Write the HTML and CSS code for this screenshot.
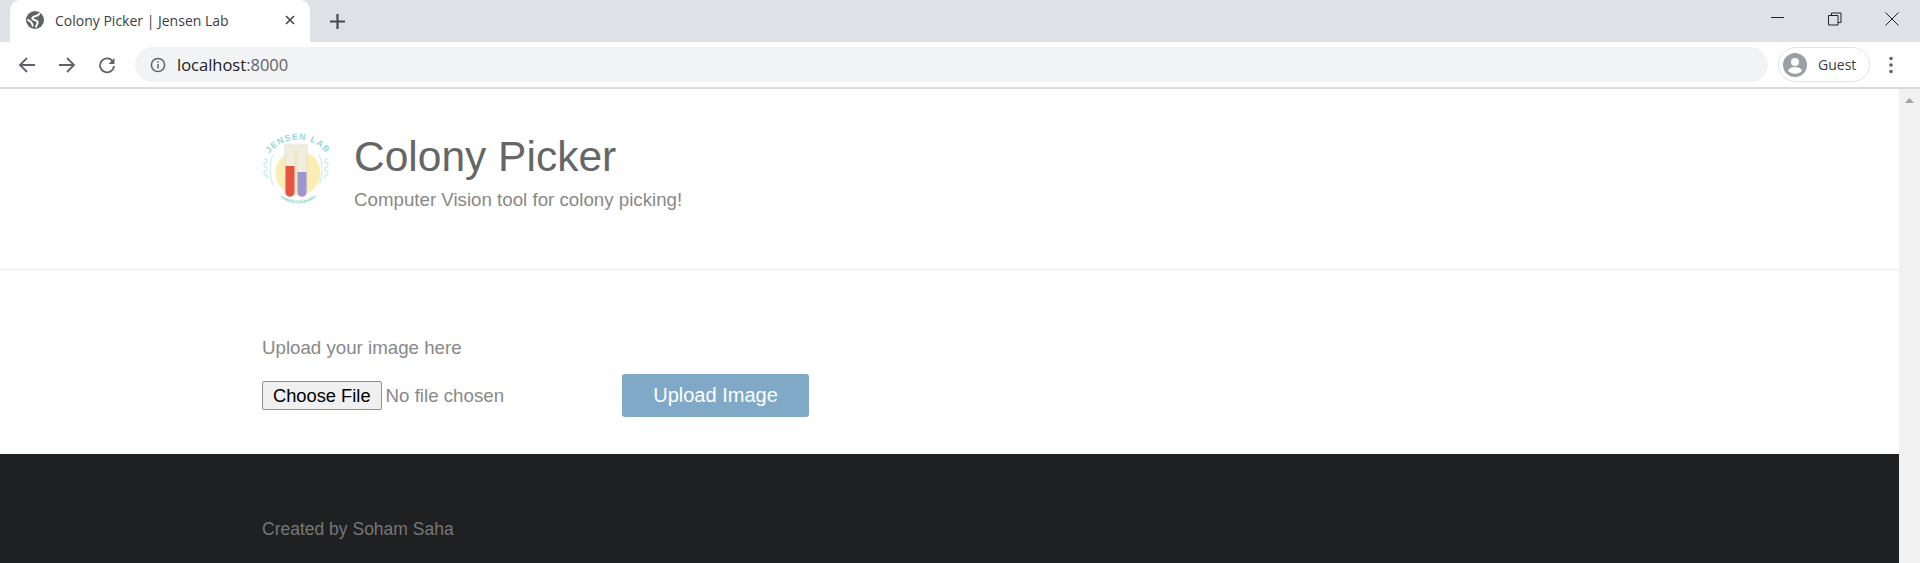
FILE: index.html
```html
<!DOCTYPE html>
<html lang="en">
<head>
<meta charset="utf-8">
<title>Colony Picker | Jensen Lab</title>
<link rel="stylesheet" href="styles.css">
</head>
<body>
<div class="tabstrip">
  <div class="tab">
    <svg class="favicon" viewBox="0 0 24 24"><circle cx="12" cy="12" r="12" fill="#5f6368"/><path d="M18 3C17 7 12 6 9 8.500 6.500 11 12 12 15 13.500 17 15.500 14 18 13 22" stroke="#fff" stroke-width="2.600" fill="none"/><path d="M2 11.500C5 13 9 16 9 20.500" stroke="#fff" stroke-width="2.400" fill="none"/></svg>
    <span class="tab-title">Colony Picker | Jensen Lab</span>
    <svg class="tab-close" viewBox="0 0 10 10"><path d="M1 1l8 8M9 1l-8 8" stroke="#45484d" stroke-width="1.700" fill="none"/></svg>
  </div>
  <svg class="newtab" viewBox="0 0 14 14"><path d="M7 0v14M0 7h14" stroke="#45484d" stroke-width="2" fill="none"/></svg>
  <div class="winctrls">
    <svg class="winbtn" viewBox="0 0 14 14"><path d="M0 5.500h13" stroke="#222" fill="none"/></svg>
    <svg class="winbtn" viewBox="0 0 14 14"><path d="M.5 3.500h9.500v9.500H.5zM3.500 3.500V1h9.500v9.500H10" stroke="#222" fill="none"/></svg>
    <svg class="winbtn" viewBox="0 0 14 14"><path d="M.5.500l13 13M13.500.500l-13 13" stroke="#222" fill="none"/></svg>
  </div>
</div>
<div class="toolbar">
  <svg class="navicon" viewBox="0 0 18 18"><path d="M17 9H2M9 2L2 9l7 7" stroke="#5f6368" stroke-width="1.800" fill="none"/></svg>
  <svg class="navicon" viewBox="0 0 18 18"><path d="M1 9h15M9 2l7 7-7 7" stroke="#5f6368" stroke-width="1.800" fill="none"/></svg>
  <svg class="navicon" viewBox="0 0 18 18"><path d="M15.200 6A7 7 0 1 0 16 10" stroke="#5f6368" stroke-width="1.800" fill="none"/><path d="M16.500 2v6h-6z" fill="#5f6368"/></svg>
  <div class="omnibox">
    <svg class="info" viewBox="0 0 16 16"><circle cx="8" cy="8" r="6.600" stroke="#5f6368" stroke-width="1.500" fill="none"/><path d="M8 7v4.500M8 4.300v1.500" stroke="#5f6368" stroke-width="1.500"/></svg>
    <span class="url">localhost<span class="url-port">:8000</span></span>
  </div>
  <div class="profile">
    <svg class="avatar" viewBox="0 0 24 24"><circle cx="12" cy="12" r="12" fill="#9aa0a6"/><circle cx="12" cy="9" r="4" fill="#fff"/><path d="M4.800 17.500c1.500-2.500 4.500-3.500 7.200-3.500s5.700 1 7.200 3.500a9.500 9.500 0 0 1-14.400 0z" fill="#fff"/></svg>
    <span class="guest">Guest</span>
  </div>
  <svg class="menu" viewBox="0 0 4 18"><circle cx="2" cy="2.500" r="1.800"/><circle cx="2" cy="9" r="1.800"/><circle cx="2" cy="15.500" r="1.800"/></svg>
</div>
<div class="viewport">
  <div class="page">
    <header class="hero">
      <svg class="logo" viewBox="0 0 72 80">
        <defs>
          <path id="arc" d="M6 28A36 36 0 0 1 70 28"/>
          <path id="arcb" d="M8 52A33 33 0 0 0 68 52"/>
          <path id="arcc" d="M16 62A28 28 0 0 0 60 62"/>
        </defs>
        <circle cx="38" cy="42" r="22.500" fill="#fbeeb5"/>
        <text class="logo-top"><textPath href="#arc" startOffset="50%" text-anchor="middle">JENSEN LAB</textPath></text>
        <text class="logo-bottom"><textPath href="#arcb" startOffset="50%" text-anchor="middle">UNIVERSITY OF ILLINOIS</textPath></text>
        <text class="logo-bottom"><textPath href="#arcc" startOffset="50%" text-anchor="middle">URBANA CHAMPAIGN</textPath></text>
        <path d="M13 24C9 32 9 46 13 54M59 24C63 32 63 46 59 54" stroke="#b5e6e6" stroke-width=".8" fill="none"/>
        <path d="M4 28h3v4H4v4h3v4H4v4h3v4M68 28h-3v4h3v4h-3v4h3v4h-3v4" stroke="#a5e0e0" stroke-width=".7" fill="none"/>
        <path d="M25 14h10v47a5 5 0 0 1-10 0z" fill="#f1eedd" stroke="#dcd9c8" stroke-width=".8"/>
        <path d="M37 14h10v47a5 5 0 0 1-10 0z" fill="#f1eedd" stroke="#dcd9c8" stroke-width=".8"/>
        <path d="M25.500 35h9v26a4.500 4.500 0 0 1-9 0z" fill="#e8523f"/>
        <path d="M37.500 41h9v20a4.500 4.500 0 0 1-9 0z" fill="#9d94d0"/>
      </svg>
      <div class="hero-text">
        <h1 class="title">Colony Picker</h1>
        <p class="subtitle">Computer Vision tool for colony picking!</p>
      </div>
    </header>
    <main class="upload">
      <p class="upload-label">Upload your image here</p>
      <form class="upload-form">
        <input class="file" type="file">
        <button class="submit" type="button">Upload Image</button>
      </form>
    </main>
    <footer class="footer">Created by Soham Saha</footer>
  </div>
  <div class="scrollbar"><svg class="scroll-up" viewBox="0 0 9 5"><path d="M4.500 0L9 5H0z" fill="#a3a3a3"/></svg></div>
</div>
</body>
</html>
```

FILE: styles.css
```css
* { box-sizing: border-box; }
html, body { margin: 0; height: 563px; overflow: hidden; background: #fff; }
body { font-family: "Liberation Sans", Arial, sans-serif; display: flex; flex-direction: column; }

.tabstrip { height: 42px; background: #dee1e6; display: flex; align-items: flex-start; flex: none; }
.tab { width: 300px; height: 42px; margin-left: 10px; background: #fff; border-radius: 10px 10px 0 0; display: flex; align-items: center; padding: 0 0 2px 16px; }
.favicon { width: 18px; height: 18px; flex: none; }
.tab-title { font: 14px "Open Sans", sans-serif; color: #3c4043; margin-left: 11px; flex: 1; white-space: nowrap; }
.tab-close { width: 10px; height: 10px; margin-right: 15px; flex: none; }
.newtab { width: 15px; height: 15px; margin: 14px 0 0 20px; flex: none; }
.winctrls { margin-left: auto; display: flex; gap: 43px; padding: 12px 21px 0 0; }
.winbtn { width: 14px; height: 14px; }

.toolbar { height: 45px; background: #fff; display: flex; align-items: center; flex: none; padding-left: 18px; }
.navicon { width: 18px; height: 18px; margin-right: 22px; flex: none; }
.navicon + .navicon + .navicon { margin-right: 19px; }
.omnibox { width: 1633px; height: 35px; background: #f1f3f4; border-radius: 18px; display: flex; align-items: center; padding-left: 15px; flex: none; }
.info { width: 16px; height: 16px; flex: none; }
.url { font: 16.500px "Open Sans", sans-serif; color: #202124; margin-left: 11px; }
.url-port { color: #5f6368; }
.profile { width: 92px; height: 35px; margin-left: 10px; border: 1.500px solid #e3e5e8; border-radius: 18px; display: flex; align-items: center; padding-left: 4px; flex: none; }
.avatar { width: 24px; height: 24px; flex: none; }
.guest { font: 14px "Open Sans", sans-serif; color: #3c4043; margin-left: 11px; }
.menu { width: 4px; height: 18px; margin-left: 19px; fill: #5f6368; flex: none; }

.viewport { flex: 1; display: flex; min-height: 0; border-top: 2px solid #dadce0; }
.page { flex: 1; min-width: 0; display: flex; flex-direction: column; }
.scrollbar { width: 21px; background: #f1f1f1; flex: none; display: flex; justify-content: center; padding-top: 9px; }
.scroll-up { width: 9px; height: 5px; }

.hero { height: 181px; border-bottom: 1px solid #eeeeee; padding: 42px 0 0 260px; display: flex; align-items: flex-start; flex: none; }
.logo { width: 72px; height: 80px; flex: none; }
.logo-top { font: bold 8.500px "Liberation Sans", sans-serif; fill: #8fd8d8; letter-spacing: 1.200px; }
.logo-bottom { font: bold 3.200px "Liberation Sans", sans-serif; fill: #8fd8d8; }
.hero-text { margin-left: 22px; }
.title { margin: 0; font-size: 42.500px; line-height: 52px; font-weight: 400; color: #666666; }
.subtitle { margin: 5px 0 0; font-size: 18.720px; line-height: 24px; color: #888888; }

.upload { height: 184px; padding: 66px 0 0 262px; flex: none; }
.upload-label { margin: 0 0 14px; font-size: 18.720px; line-height: 24px; color: #888888; }
.upload-form { display: flex; align-items: center; }
.file { width: 360px; font-family: "Liberation Sans", sans-serif; font-size: 18.720px; color: #888888; }
.file::file-selector-button { font-size: 18.300px; color: #000; padding: 3px 10px 2px; background: #f0f0f0; border: 1px solid #8f8f8f; border-radius: 2px; margin-right: 4px; }
.submit { width: 187px; height: 43px; margin-left: 0; border: 0; border-radius: 3px; background: #7fa9c7; color: #fff; font-family: "Liberation Sans", sans-serif; font-size: 20px; }

.footer { flex: 1; background: #1f2022; color: #777777; font-size: 17.500px; padding: 65px 0 0 262px; }
```
